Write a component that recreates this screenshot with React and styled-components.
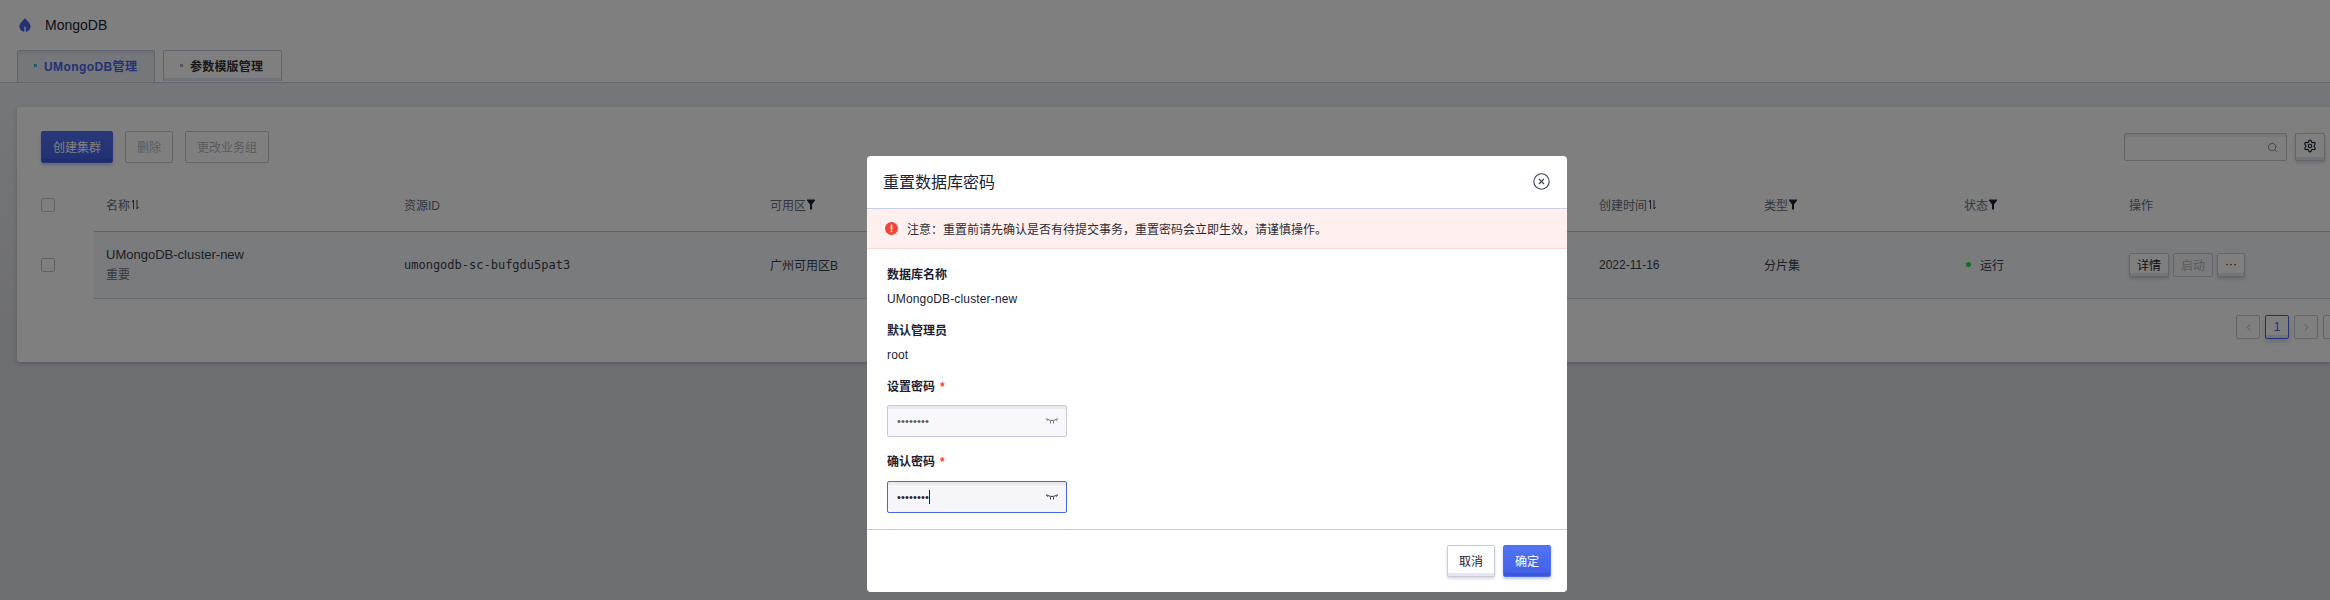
import React from 'react';
import styled, { createGlobalStyle } from 'styled-components';
import { ChevronLeft, ChevronRight, Search, Settings } from 'lucide-react';

const GlobalStyle = createGlobalStyle`
  html, body { margin: 0; padding: 0; }
  body {
    background: #dfe0e6;
    font-family: "Liberation Sans", "Noto Sans CJK SC", sans-serif;
    font-size: 12px;
    color: #1c2233;
    overflow: hidden;
  }
`;

const Page = styled.div`
  position: relative;
  width: 2330px;
  height: 600px;
  overflow: hidden;
`;

const Header = styled.div`
  background: #fff;
  height: 83px;
  border-bottom: 1px solid #c8cdde;
  box-sizing: border-box;
  padding-left: 17px;
  display: flex;
  flex-direction: column;
`;

const TitleRow = styled.div`
  display: flex;
  align-items: center;
  gap: 14px;
  height: 51px;
  font-size: 14px;
  padding-left: 2px;
  box-sizing: border-box;
`;

const Tabs = styled.div`
  display: flex;
  gap: 8px;
`;

const Tab = styled.div`
  box-sizing: border-box;
  position: relative;
  width: ${({ $width }) => $width}px;
  height: ${({ $active }) => ($active ? 32 : 31)}px;
  display: flex;
  align-items: center;
  gap: 7px;
  padding-left: 16px;
  padding-bottom: ${({ $active }) => ($active ? 2 : 1)}px;
  font-size: 12px;
  font-weight: 700;
  letter-spacing: ${({ $active }) => ($active ? 0.4 : 0.2)}px;
  border: 1px solid #c3c8dc;
  border-bottom: none;
  border-radius: 2px 2px 0 0;
  background: ${({ $active }) => ($active ? '#eceef5' : '#fff')};
  color: ${({ $active }) => ($active ? '#4664e6' : '#333')};
  box-shadow: ${({ $active }) => ($active ? 'inset 0 3px 0 #e2e4ee' : 'inset 0 -3px 0 #e4e8f6')};
`;

const TabDot = styled.span`
  width: 3px;
  height: 3px;
  background: ${({ $active }) => ($active ? '#35c0d8' : '#aaa')};
`;

const Main = styled.div`
  padding: 24px 0 0 17px;
  height: 517px;
  box-sizing: border-box;
  background: linear-gradient(#eceef5, #dddee4 255px);
`;

const Card = styled.div`
  box-sizing: border-box;
  width: 2313px;
  height: 255px;
  background: #fff;
  border-radius: 3px 0 0 3px;
  box-shadow: 0 2px 4px rgba(60, 66, 90, 0.25);
  padding-top: 24px;
`;

const Toolbar = styled.div`
  display: flex;
  align-items: center;
  gap: 12px;
  height: 32px;
  padding: 0 5px 0 24px;
`;

const Button = styled.div`
  box-sizing: border-box;
  flex: none;
  width: ${({ $width }) => $width}px;
  height: ${({ $height }) => $height || 32}px;
  padding-bottom: 2px;
  display: inline-flex;
  align-items: center;
  justify-content: center;
  font-size: 12px;
  border-radius: 2px;
  white-space: nowrap;
  border: 1px solid ${({ $kind }) => ($kind === 'primary' ? '#4f6eef' : '#c8cad6')};
  color: ${({ $kind }) => ($kind === 'primary' ? '#fff' : $kind === 'disabled' ? '#b4b6bd' : '#1c2233')};
  background: ${({ $kind }) =>
    $kind === 'primary' ? 'linear-gradient(#5273f3, #4160e8)' : $kind === 'disabled' ? 'transparent' : '#fff'};
  box-shadow: ${({ $kind }) =>
    $kind === 'disabled'
      ? 'none'
      : $kind === 'primary'
        ? '0 2px 3px rgba(70, 100, 230, 0.35), inset 0 -3px 0 #3b58d8'
        : '0 2px 3px rgba(60, 70, 110, 0.2), inset 0 -3px 0 #e4e8f6'};
`;

const ToolbarRight = styled.div`
  margin-left: auto;
  display: flex;
  align-items: center;
  gap: 8px;
`;

const SearchBox = styled.div`
  box-sizing: border-box;
  width: 163px;
  height: 28px;
  border: 1px solid #c8cad6;
  border-radius: 2px;
  display: flex;
  align-items: center;
  justify-content: flex-end;
  padding-right: 8px;
  color: #858a9e;
  background: linear-gradient(#f1f1f4 3px, #fff 3px);
`;

const Table = styled.div`
  margin-top: 16px;
`;

const Row = styled.div`
  display: flex;
  align-items: stretch;
`;

const CheckCell = styled.div`
  box-sizing: border-box;
  width: 77px;
  flex: none;
  display: flex;
  align-items: center;
  padding-left: 24px;
`;

const Checkbox = styled.div`
  box-sizing: border-box;
  width: 14px;
  height: 14px;
  border: 1px solid #c2c4ce;
  border-radius: 2px;
  background: #fff;
`;

const Cols = styled.div`
  flex: 1;
  box-sizing: border-box;
  display: grid;
  grid-template-columns: 298px 366px 829px 165px 200px 165px 1fr;
  align-items: center;
  height: ${({ $height }) => $height}px;
  background: ${({ $body }) => ($body ? '#f5f6fa' : 'transparent')};
  border-top: ${({ $body }) => ($body ? '1px solid #c5c8d6' : 'none')};
  border-bottom: ${({ $body }) => ($body ? '1px solid #d0d3e4' : 'none')};
`;

const HeadCell = styled.div`
  display: flex;
  align-items: center;
  gap: 1px;
  padding: 0 0 2px 12px;
  color: #6b6e7c;
  font-size: 12px;
`;

const Cell = styled.div`
  padding-left: 12px;
  padding-bottom: ${({ $cjk }) => ($cjk ? 2 : 0)}px;
  font-size: 12px;
  color: #3a3e4e;
  font-family: ${({ $mono }) => ($mono ? '"DejaVu Sans Mono", monospace' : 'inherit')};
`;

const NameLine = styled.div`
  line-height: 21px;
  font-size: ${({ $muted }) => ($muted ? 12 : 13)}px;
  color: ${({ $muted }) => ($muted ? '#6d7184' : '#3a3e4e')};
`;

const Status = styled(Cell)`
  display: flex;
  align-items: center;
  gap: 9px;
`;

const StatusDot = styled.span`
  width: 5px;
  height: 5px;
  margin-left: 2px;
  border-radius: 50%;
  background: #20e050;
`;

const Actions = styled(Cell)`
  display: flex;
  gap: 4px;
`;

const Pager = styled.div`
  display: flex;
  gap: 5px;
  justify-content: flex-end;
  margin: 16px -17px 0 0;
`;

const PageItem = styled.div`
  box-sizing: border-box;
  width: 24px;
  height: 24px;
  display: flex;
  align-items: center;
  justify-content: center;
  border: 1px solid ${({ $active }) => ($active ? '#4664e6' : '#c8cad6')};
  border-radius: 2px;
  color: ${({ $active }) => ($active ? '#4664e6' : '#a9abb5')};
  background: #fff;
  font-size: 12px;
  box-shadow: ${({ $active }) => ($active ? '0 3px 5px rgba(60, 70, 110, 0.2), inset 0 -3px 0 #e4e8f6' : 'none')};
`;

const Overlay = styled.div`
  position: absolute;
  inset: 0;
  background: rgba(0, 0, 0, 0.5);
`;

const Modal = styled.div`
  position: absolute;
  left: 867px;
  top: 156px;
  width: 700px;
  height: 436px;
  background: #fff;
  border-radius: 4px;
  display: flex;
  flex-direction: column;
  overflow: hidden;
`;

const ModalHead = styled.div`
  box-sizing: border-box;
  height: 53px;
  flex: none;
  padding: 0 17px 2px 16px;
  display: flex;
  align-items: center;
  justify-content: space-between;
  font-size: 16px;
  border-bottom: 1px solid #c8cfe0;
  color: #1c2233;
`;

const Notice = styled.div`
  box-sizing: border-box;
  height: 40px;
  flex: none;
  background: #fff0ef;
  border-bottom: 1px solid #ffd6d4;
  display: flex;
  align-items: center;
  gap: 9px;
  padding-left: 18px;
  font-size: 12px;
  color: #2a2d38;
`;

const Form = styled.div`
  flex: 1;
  padding: 17px 20px 0;
  display: flex;
  flex-direction: column;
`;

const Label = styled.div`
  font-size: 12px;
  font-weight: 700;
  color: #1c2233;
  line-height: 18px;
`;

const Star = styled.span`
  color: #f44336;
  margin-left: 5px;
`;

const Value = styled.div`
  font-size: 12px;
  letter-spacing: 0.15px;
  color: #1c2233;
  line-height: 18px;
  margin: 6px 0 14px;
`;

const PasswordField = styled.div`
  box-sizing: border-box;
  width: 180px;
  height: 32px;
  flex: none;
  margin: ${({ $focus }) => ($focus ? '10px 0 0' : '9px 0 16px')};
  border: 1px solid ${({ $focus }) => ($focus ? '#4664e6' : '#c5c9dc')};
  border-radius: 2px;
  background: linear-gradient(#e9e9ee 3px, ${({ $focus }) => ($focus ? '#f5f5fa' : '#f8f8fc')} 3px);
  display: flex;
  align-items: center;
  justify-content: space-between;
  padding: 0 8px 0 9px;
  color: ${({ $focus }) => ($focus ? '#1c2233' : '#5a5e6c')};
`;

const Dots = styled.span`
  display: inline-flex;
  align-items: center;
  height: 14px;
  font-size: 11px;
  letter-spacing: 0.15px;
`;

const Caret = styled.span`
  width: 1px;
  height: 14px;
  background: #1c2233;
`;

const ModalFoot = styled.div`
  box-sizing: border-box;
  height: 63px;
  flex: none;
  border-top: 1px solid #c8cad6;
  display: flex;
  justify-content: flex-end;
  align-items: flex-start;
  gap: 8px;
  padding: 15px 16px 0 0;
`;

const CloseIcon = () => (
  <svg width="17" height="17" viewBox="0 0 17 17" fill="none" stroke="#3b4258" strokeWidth="1.1">
    <circle cx="8.5" cy="8.5" r="7.7" />
    <path d="M6 6l5 5M11 6l-5 5" />
  </svg>
);

const AlertIcon = () => (
  <svg width="13" height="13" viewBox="0 0 13 13">
    <circle cx="6.5" cy="6.5" r="6.5" fill="#f44336" />
    <rect x="5.7" y="2.6" width="1.6" height="5" fill="#fff" />
    <rect x="5.7" y="8.7" width="1.6" height="1.6" fill="#fff" />
  </svg>
);

const EyeOff = () => (
  <svg width="12" height="6" viewBox="0 0 12 6" fill="none" stroke="currentColor" strokeWidth="0.9">
    <path d="M.5.5c3 2.6 8 2.6 11 0M1.8 2.5L.3 1.3M10.2 2.5l1.5-1.2M4.5 3.2V5.5M7.5 3.2V5.5" />
  </svg>
);

const Logo = () => (
  <svg width="12" height="14" viewBox="0 0 12 14">
    <path d="M6 0C7 2 11.5 4.2 11.5 8.5c0 3-2.3 5.100-4.800 5.300V8.500H5.300v5.300C2.800 13.600.5 11.500.5 8.500.5 4.200 5 2 6 0z" fill="#4664e6" />
  </svg>
);

const SortIcon = () => (
  <svg width="9" height="11" viewBox="0 0 9 11" fill="none" stroke="#3b4258" strokeWidth="1">
    <path d="M2.5 10V1L1 3M6 1v9l1.5-2" />
  </svg>
);

const FilterIcon = () => (
  <svg width="8" height="11" viewBox="0 0 8 11" fill="#1c2233">
    <path d="M0 .5h8v1L5 5.5V10.5H3V5.500L0 1.500z" />
  </svg>
);

const heads = [
  { label: '名称', icon: <SortIcon /> },
  { label: '资源ID' },
  { label: '可用区', icon: <FilterIcon /> },
  { label: '创建时间', icon: <SortIcon /> },
  { label: '类型', icon: <FilterIcon /> },
  { label: '状态', icon: <FilterIcon /> },
  { label: '操作' },
];

export default function App() {
  return (
    <Page>
      <GlobalStyle />
      <Header>
        <TitleRow>
          <Logo />
          MongoDB
        </TitleRow>
        <Tabs>
          <Tab $active $width={138}>
            <TabDot $active />
            UMongoDB管理
          </Tab>
          <Tab $width={119}>
            <TabDot />
            参数模版管理
          </Tab>
        </Tabs>
      </Header>
      <Main>
        <Card>
          <Toolbar>
            <Button $kind="primary" $width={72}>创建集群</Button>
            <Button $kind="disabled" $width={48}>删除</Button>
            <Button $kind="disabled" $width={84}>更改业务组</Button>
            <ToolbarRight>
              <SearchBox><Search size={11} /></SearchBox>
              <Button $width={30} $height={28}><Settings size={14} /></Button>
            </ToolbarRight>
          </Toolbar>
          <Table>
            <Row>
              <CheckCell><Checkbox /></CheckCell>
              <Cols $height={52}>
                {heads.map((head) => (
                  <HeadCell key={head.label}>{head.label}{head.icon}</HeadCell>
                ))}
              </Cols>
            </Row>
            <Row>
              <CheckCell><Checkbox /></CheckCell>
              <Cols $body $height={68}>
                <Cell>
                  <NameLine>UMongoDB-cluster-new</NameLine>
                  <NameLine $muted>重要</NameLine>
                </Cell>
                <Cell $mono>umongodb-sc-bufgdu5pat3</Cell>
                <Cell $cjk>广州可用区B</Cell>
                <Cell>2022-11-16</Cell>
                <Cell $cjk>分片集</Cell>
                <Status $cjk><StatusDot />运行</Status>
                <Actions>
                  <Button $height={24} $width={40}>详情</Button>
                  <Button $height={24} $width={40} $kind="disabled">启动</Button>
                  <Button $height={24} $width={28}>···</Button>
                </Actions>
              </Cols>
            </Row>
            <Pager>
              <PageItem><ChevronLeft size={11} /></PageItem>
              <PageItem $active>1</PageItem>
              <PageItem><ChevronRight size={11} /></PageItem>
              <PageItem />
            </Pager>
          </Table>
        </Card>
      </Main>
      <Overlay />
      <Modal>
        <ModalHead>
          重置数据库密码
          <CloseIcon />
        </ModalHead>
        <Notice>
          <AlertIcon />
          注意：重置前请先确认是否有待提交事务，重置密码会立即生效，请谨慎操作。
        </Notice>
        <Form>
          <Label>数据库名称</Label>
          <Value>UMongoDB-cluster-new</Value>
          <Label>默认管理员</Label>
          <Value>root</Value>
          <Label>设置密码<Star>*</Star></Label>
          <PasswordField>
            <Dots>••••••••</Dots>
            <EyeOff />
          </PasswordField>
          <Label>确认密码<Star>*</Star></Label>
          <PasswordField $focus>
            <Dots>••••••••<Caret /></Dots>
            <EyeOff />
          </PasswordField>
        </Form>
        <ModalFoot>
          <Button $width={48}>取消</Button>
          <Button $kind="primary" $width={48}>确定</Button>
        </ModalFoot>
      </Modal>
    </Page>
  );
}
